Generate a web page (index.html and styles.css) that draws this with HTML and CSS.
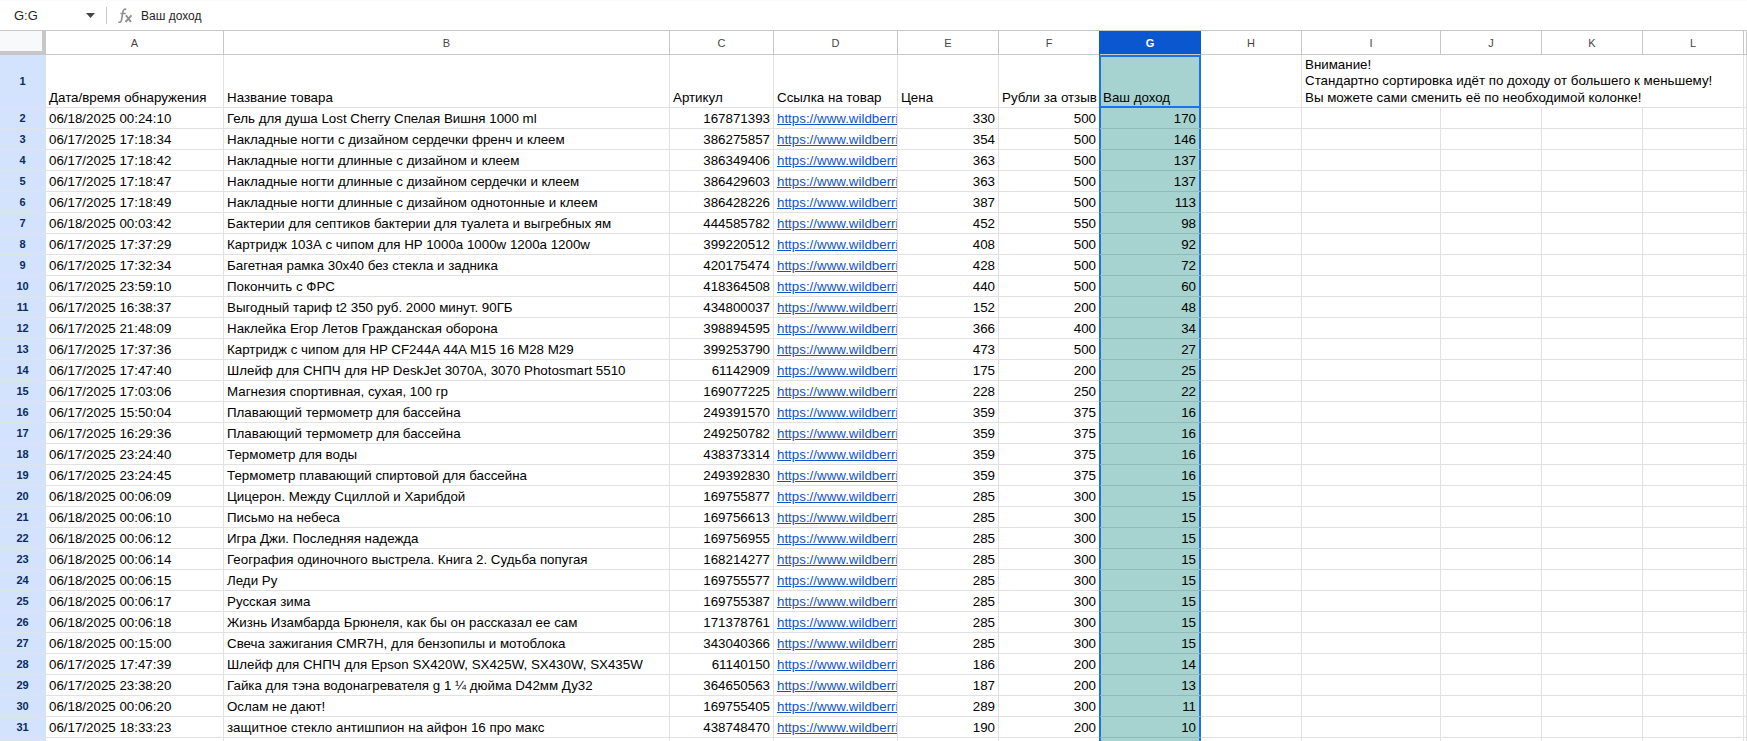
FILE: index.html
```html
<!DOCTYPE html>
<html lang="ru">
<head>
<meta charset="utf-8">
<title>Таблица</title>
<link rel="stylesheet" href="styles.css">
</head>
<body>
<div class="formula-bar">
  <div class="name-box"><span class="name-text">G:G</span><svg class="caret" width="9" height="5" viewBox="0 0 9 5"><path d="M0 0h9L4.500 5z" fill="#444746"/></svg></div>
  <div class="bar-divider"></div>
  <svg class="fx" width="17" height="17" viewBox="0 0 17 17"><path d="M10.300 2.400C8.700 1.700 7.400 2.500 7 4.500L5.500 13C5.100 15 4 15.700 2.300 15M4.500 6.500H9.800" fill="none" stroke="#8e9092" stroke-width="1.600"/><path d="M10 8.300L15 15M15.500 8.300L9.500 15" fill="none" stroke="#8e9092" stroke-width="1.900"/></svg>
  <div class="bar-text">Ваш доход</div>
</div>
<table class="sheet">
  <colgroup>
    <col class="c-head"><col class="c-a"><col class="c-b"><col class="c-c"><col class="c-d"><col class="c-std"><col class="c-std"><col class="c-std"><col class="c-std"><col class="c-i"><col class="c-std"><col class="c-std"><col class="c-std"><col class="c-m">
  </colgroup>
  <thead>
    <tr class="letters"><th class="corner"></th><th>A</th><th>B</th><th>C</th><th>D</th><th>E</th><th>F</th><th class="active-col">G</th><th>H</th><th>I</th><th>J</th><th>K</th><th>L</th><th>M</th></tr>
  </thead>
  <tbody>
    <tr class="tall"><th class="rn">1</th><td>Дата/время обнаружения</td><td>Название товара</td><td>Артикул</td><td>Ссылка на товар</td><td>Цена</td><td>Рубли за отзыв</td><td class="g first">Ваш доход</td><td></td><td colspan="4" class="note">Внимание!<br>Стандартно сортировка идёт по доходу от большего к меньшему!<br>Вы можете сами сменить её по необходимой колонке!</td><td></td></tr>
    <tr><th class="rn">2</th><td>06/18/2025 00:24:10</td><td>Гель для душа Lost Cherry Спелая Вишня 1000 ml</td><td class="n">167871393</td><td class="l">https://www.wildberries.ru/catalog/167871393</td><td class="n">330</td><td class="n">500</td><td class="g n">170</td><td></td><td></td><td></td><td></td><td></td><td></td></tr>
    <tr><th class="rn">3</th><td>06/17/2025 17:18:34</td><td>Накладные ногти с дизайном сердечки френч и клеем</td><td class="n">386275857</td><td class="l">https://www.wildberries.ru/catalog/386275857</td><td class="n">354</td><td class="n">500</td><td class="g n">146</td><td></td><td></td><td></td><td></td><td></td><td></td></tr>
    <tr><th class="rn">4</th><td>06/17/2025 17:18:42</td><td>Накладные ногти длинные с дизайном и клеем</td><td class="n">386349406</td><td class="l">https://www.wildberries.ru/catalog/386349406</td><td class="n">363</td><td class="n">500</td><td class="g n">137</td><td></td><td></td><td></td><td></td><td></td><td></td></tr>
    <tr><th class="rn">5</th><td>06/17/2025 17:18:47</td><td>Накладные ногти длинные с дизайном сердечки и клеем</td><td class="n">386429603</td><td class="l">https://www.wildberries.ru/catalog/386429603</td><td class="n">363</td><td class="n">500</td><td class="g n">137</td><td></td><td></td><td></td><td></td><td></td><td></td></tr>
    <tr><th class="rn">6</th><td>06/17/2025 17:18:49</td><td>Накладные ногти длинные с дизайном однотонные и клеем</td><td class="n">386428226</td><td class="l">https://www.wildberries.ru/catalog/386428226</td><td class="n">387</td><td class="n">500</td><td class="g n">113</td><td></td><td></td><td></td><td></td><td></td><td></td></tr>
    <tr><th class="rn">7</th><td>06/18/2025 00:03:42</td><td>Бактерии для септиков бактерии для туалета и выгребных ям</td><td class="n">444585782</td><td class="l">https://www.wildberries.ru/catalog/444585782</td><td class="n">452</td><td class="n">550</td><td class="g n">98</td><td></td><td></td><td></td><td></td><td></td><td></td></tr>
    <tr><th class="rn">8</th><td>06/17/2025 17:37:29</td><td>Картридж 103А с чипом для HP 1000a 1000w 1200a 1200w</td><td class="n">399220512</td><td class="l">https://www.wildberries.ru/catalog/399220512</td><td class="n">408</td><td class="n">500</td><td class="g n">92</td><td></td><td></td><td></td><td></td><td></td><td></td></tr>
    <tr><th class="rn">9</th><td>06/17/2025 17:32:34</td><td>Багетная рамка 30х40 без стекла и задника</td><td class="n">420175474</td><td class="l">https://www.wildberries.ru/catalog/420175474</td><td class="n">428</td><td class="n">500</td><td class="g n">72</td><td></td><td></td><td></td><td></td><td></td><td></td></tr>
    <tr><th class="rn">10</th><td>06/17/2025 23:59:10</td><td>Покончить с ФРС</td><td class="n">418364508</td><td class="l">https://www.wildberries.ru/catalog/418364508</td><td class="n">440</td><td class="n">500</td><td class="g n">60</td><td></td><td></td><td></td><td></td><td></td><td></td></tr>
    <tr><th class="rn">11</th><td>06/17/2025 16:38:37</td><td>Выгодный тариф t2 350 руб. 2000 минут. 90ГБ</td><td class="n">434800037</td><td class="l">https://www.wildberries.ru/catalog/434800037</td><td class="n">152</td><td class="n">200</td><td class="g n">48</td><td></td><td></td><td></td><td></td><td></td><td></td></tr>
    <tr><th class="rn">12</th><td>06/17/2025 21:48:09</td><td>Наклейка Егор Летов Гражданская оборона</td><td class="n">398894595</td><td class="l">https://www.wildberries.ru/catalog/398894595</td><td class="n">366</td><td class="n">400</td><td class="g n">34</td><td></td><td></td><td></td><td></td><td></td><td></td></tr>
    <tr><th class="rn">13</th><td>06/17/2025 17:37:36</td><td>Картридж с чипом для HP CF244A 44A M15 16 M28 M29</td><td class="n">399253790</td><td class="l">https://www.wildberries.ru/catalog/399253790</td><td class="n">473</td><td class="n">500</td><td class="g n">27</td><td></td><td></td><td></td><td></td><td></td><td></td></tr>
    <tr><th class="rn">14</th><td>06/17/2025 17:47:40</td><td>Шлейф для СНПЧ для HP DeskJet 3070A, 3070 Photosmart 5510</td><td class="n">61142909</td><td class="l">https://www.wildberries.ru/catalog/61142909</td><td class="n">175</td><td class="n">200</td><td class="g n">25</td><td></td><td></td><td></td><td></td><td></td><td></td></tr>
    <tr><th class="rn">15</th><td>06/17/2025 17:03:06</td><td>Магнезия спортивная, сухая, 100 гр</td><td class="n">169077225</td><td class="l">https://www.wildberries.ru/catalog/169077225</td><td class="n">228</td><td class="n">250</td><td class="g n">22</td><td></td><td></td><td></td><td></td><td></td><td></td></tr>
    <tr><th class="rn">16</th><td>06/17/2025 15:50:04</td><td>Плавающий термометр для бассейна</td><td class="n">249391570</td><td class="l">https://www.wildberries.ru/catalog/249391570</td><td class="n">359</td><td class="n">375</td><td class="g n">16</td><td></td><td></td><td></td><td></td><td></td><td></td></tr>
    <tr><th class="rn">17</th><td>06/17/2025 16:29:36</td><td>Плавающий термометр для бассейна</td><td class="n">249250782</td><td class="l">https://www.wildberries.ru/catalog/249250782</td><td class="n">359</td><td class="n">375</td><td class="g n">16</td><td></td><td></td><td></td><td></td><td></td><td></td></tr>
    <tr><th class="rn">18</th><td>06/17/2025 23:24:40</td><td>Термометр для воды</td><td class="n">438373314</td><td class="l">https://www.wildberries.ru/catalog/438373314</td><td class="n">359</td><td class="n">375</td><td class="g n">16</td><td></td><td></td><td></td><td></td><td></td><td></td></tr>
    <tr><th class="rn">19</th><td>06/17/2025 23:24:45</td><td>Термометр плавающий спиртовой для бассейна</td><td class="n">249392830</td><td class="l">https://www.wildberries.ru/catalog/249392830</td><td class="n">359</td><td class="n">375</td><td class="g n">16</td><td></td><td></td><td></td><td></td><td></td><td></td></tr>
    <tr><th class="rn">20</th><td>06/18/2025 00:06:09</td><td>Цицерон. Между Сциллой и Харибдой</td><td class="n">169755877</td><td class="l">https://www.wildberries.ru/catalog/169755877</td><td class="n">285</td><td class="n">300</td><td class="g n">15</td><td></td><td></td><td></td><td></td><td></td><td></td></tr>
    <tr><th class="rn">21</th><td>06/18/2025 00:06:10</td><td>Письмо на небеса</td><td class="n">169756613</td><td class="l">https://www.wildberries.ru/catalog/169756613</td><td class="n">285</td><td class="n">300</td><td class="g n">15</td><td></td><td></td><td></td><td></td><td></td><td></td></tr>
    <tr><th class="rn">22</th><td>06/18/2025 00:06:12</td><td>Игра Джи. Последняя надежда</td><td class="n">169756955</td><td class="l">https://www.wildberries.ru/catalog/169756955</td><td class="n">285</td><td class="n">300</td><td class="g n">15</td><td></td><td></td><td></td><td></td><td></td><td></td></tr>
    <tr><th class="rn">23</th><td>06/18/2025 00:06:14</td><td>География одиночного выстрела. Книга 2. Судьба попугая</td><td class="n">168214277</td><td class="l">https://www.wildberries.ru/catalog/168214277</td><td class="n">285</td><td class="n">300</td><td class="g n">15</td><td></td><td></td><td></td><td></td><td></td><td></td></tr>
    <tr><th class="rn">24</th><td>06/18/2025 00:06:15</td><td>Леди Ру</td><td class="n">169755577</td><td class="l">https://www.wildberries.ru/catalog/169755577</td><td class="n">285</td><td class="n">300</td><td class="g n">15</td><td></td><td></td><td></td><td></td><td></td><td></td></tr>
    <tr><th class="rn">25</th><td>06/18/2025 00:06:17</td><td>Русская зима</td><td class="n">169755387</td><td class="l">https://www.wildberries.ru/catalog/169755387</td><td class="n">285</td><td class="n">300</td><td class="g n">15</td><td></td><td></td><td></td><td></td><td></td><td></td></tr>
    <tr><th class="rn">26</th><td>06/18/2025 00:06:18</td><td>Жизнь Изамбарда Брюнеля, как бы он рассказал ее сам</td><td class="n">171378761</td><td class="l">https://www.wildberries.ru/catalog/171378761</td><td class="n">285</td><td class="n">300</td><td class="g n">15</td><td></td><td></td><td></td><td></td><td></td><td></td></tr>
    <tr><th class="rn">27</th><td>06/18/2025 00:15:00</td><td>Свеча зажигания CMR7H, для бензопилы и мотоблока</td><td class="n">343040366</td><td class="l">https://www.wildberries.ru/catalog/343040366</td><td class="n">285</td><td class="n">300</td><td class="g n">15</td><td></td><td></td><td></td><td></td><td></td><td></td></tr>
    <tr><th class="rn">28</th><td>06/17/2025 17:47:39</td><td>Шлейф для СНПЧ для Epson SX420W, SX425W, SX430W, SX435W</td><td class="n">61140150</td><td class="l">https://www.wildberries.ru/catalog/61140150</td><td class="n">186</td><td class="n">200</td><td class="g n">14</td><td></td><td></td><td></td><td></td><td></td><td></td></tr>
    <tr><th class="rn">29</th><td>06/17/2025 23:38:20</td><td>Гайка для тэна водонагревателя g 1 ¼ дюйма D42мм Ду32</td><td class="n">364650563</td><td class="l">https://www.wildberries.ru/catalog/364650563</td><td class="n">187</td><td class="n">200</td><td class="g n">13</td><td></td><td></td><td></td><td></td><td></td><td></td></tr>
    <tr><th class="rn">30</th><td>06/18/2025 00:06:20</td><td>Ослам не дают!</td><td class="n">169755405</td><td class="l">https://www.wildberries.ru/catalog/169755405</td><td class="n">289</td><td class="n">300</td><td class="g n">11</td><td></td><td></td><td></td><td></td><td></td><td></td></tr>
    <tr><th class="rn">31</th><td>06/17/2025 18:33:23</td><td>защитное стекло антишпион на айфон 16 про макс</td><td class="n">438748470</td><td class="l">https://www.wildberries.ru/catalog/438748470</td><td class="n">190</td><td class="n">200</td><td class="g n">10</td><td></td><td></td><td></td><td></td><td></td><td></td></tr>
    <tr><th class="rn">32</th><td></td><td></td><td></td><td></td><td></td><td></td><td class="g"></td><td></td><td></td><td></td><td></td><td></td><td></td><td></td></tr>
  </tbody>
</table>
</body>
</html>
```
FILE: styles.css
```css
html, body {
  margin: 0;
  height: 100%;
  overflow: hidden;
  background: #fff;
}
body {
  font-family: "Liberation Sans", Arial, sans-serif;
  font-size: 13.33px;
  color: #000;
}
.formula-bar {
  height: 31px;
  box-sizing: border-box;
  display: flex;
  align-items: center;
  border-top: 1px solid #f9fbfd;
  border-bottom: 1px solid #c7c7c7;
  color: #1f1f1f;
}
.name-box {
  width: 106px;
  box-sizing: border-box;
  padding-left: 14px;
  display: flex;
  align-items: center;
  font-size: 13px;
}
.name-text { flex: 1; }
.caret { margin-right: 11px; }
.bar-divider {
  width: 1px;
  height: 17px;
  background: #c7c7c7;
}
.fx { margin-left: 9px; }
.bar-text {
  margin-left: 8px;
  font-size: 12px;
}
.sheet {
  table-layout: fixed;
  border-collapse: separate;
  border-spacing: 0;
  width: 1747px;
}
.c-head { width: 46px; }
.c-a { width: 178px; }
.c-b { width: 446px; }
.c-c { width: 104px; }
.c-d { width: 124px; }
.c-std { width: 101px; }
.c-i { width: 139px; }
.c-m { width: 3px; }
.sheet th, .sheet td {
  box-sizing: border-box;
  border-right: 1px solid #e1e1e1;
  border-bottom: 1px solid #e1e1e1;
  padding: 0 3px;
  height: 21px;
  white-space: nowrap;
  overflow: hidden;
  line-height: 16px;
  vertical-align: bottom;
  font-weight: 400;
}
.sheet td { padding-bottom: 1px; }
.sheet .letters th {
  height: 24px;
  background: #fff;
  border-right-color: #c7c7c7;
  border-bottom-color: #c7c7c7;
  font-size: 11px;
  color: #444746;
  vertical-align: middle;
  text-align: center;
}
.sheet .letters .corner {
  background: #f8f9fa;
  border-right: 4px solid #c7c7c7;
  border-bottom: 4px solid #c7c7c7;
}
.sheet .letters .active-col {
  background: #0b57d0;
  border-right-color: #0b57d0;
  box-shadow: -1px 0 #0b57d0;
  color: #fff;
  font-weight: 700;
}
.sheet .rn {
  background: #d3e3fd;
  border-right-color: #d3e3fd;
  border-bottom-color: #e1e3e6;
  color: #0b2b5e;
  font-size: 11px;
  font-weight: 700;
  text-align: center;
  vertical-align: middle;
  padding: 0;
}
.sheet .tall th, .sheet .tall td { height: 53px; }
.sheet .note { line-height: 16.4px; }
.n { text-align: right; }
.sheet .l {
  color: #1155cc;
  text-decoration: underline;
  padding-right: 0;
}
.sheet .g {
  background: #a6d3cf;
  box-shadow: -1px 0 #1a73e8, inset 1px 0 #1a73e8, inset -1px 0 #1a73e8;
  border-right-color: #1a73e8;
  border-bottom-color: #8fbab6;
  padding-right: 4px;
}
.sheet .first {
  border-bottom-color: #1a73e8;
  box-shadow: -1px 0 #1a73e8, inset 1px 0 #1a73e8, inset -1px 0 #1a73e8, inset 0 2px #1a73e8, inset 0 -1px #1a73e8;
}
```
